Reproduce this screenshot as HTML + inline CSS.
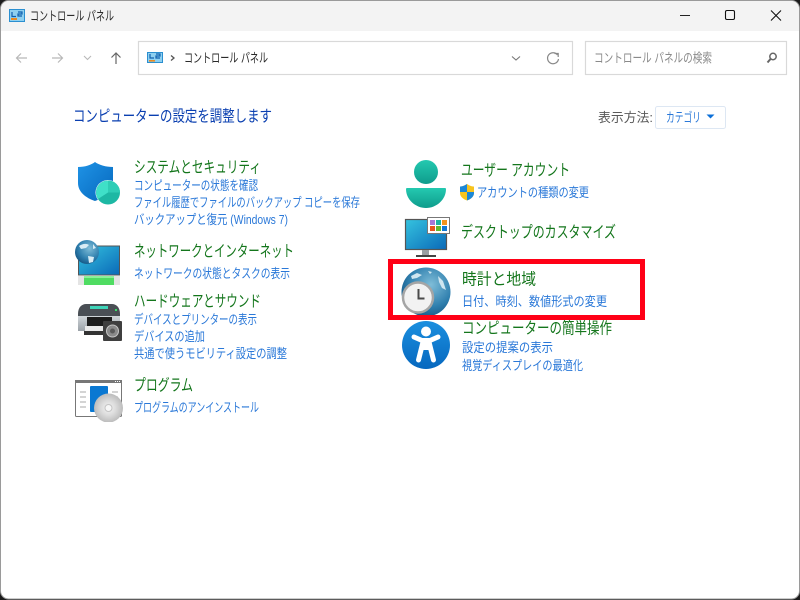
<!DOCTYPE html>
<html lang="ja">
<head>
<meta charset="utf-8">
<title>コントロール パネル</title>
<style>
html,body{margin:0;padding:0;width:800px;height:600px;overflow:hidden;background:#fff}
svg{display:block;position:absolute;left:0;top:0}
text{font-family:"Liberation Sans","Noto Sans CJK JP",sans-serif;white-space:pre}
.t{font-size:16px;fill:#14761c}
.l{font-size:13px;fill:#2a78d8}
.g{font-size:13px;fill:#2a2a2a}
</style>
</head>
<body>
<svg width="800" height="600" viewBox="0 0 800 600" xmlns="http://www.w3.org/2000/svg">
<defs>
<linearGradient id="sh" x1="0" y1="0" x2="1" y2="1"><stop offset="0" stop-color="#1f93e6"/><stop offset="1" stop-color="#0668bd"/></linearGradient>
<linearGradient id="mon" x1="0" y1="0" x2="1" y2="1"><stop offset="0" stop-color="#35c3df"/><stop offset="1" stop-color="#0a69b8"/></linearGradient>
<linearGradient id="usr" x1="0" y1="0" x2="0" y2="1"><stop offset="0" stop-color="#24c9b0"/><stop offset="1" stop-color="#0e9c8c"/></linearGradient>
<radialGradient id="glb" cx=".6" cy=".35" r=".75"><stop offset="0" stop-color="#7fbdd8"/><stop offset=".6" stop-color="#2f7fae"/><stop offset="1" stop-color="#0f4e7c"/></radialGradient>
<radialGradient id="cd" cx=".5" cy=".5" r=".5"><stop offset="0" stop-color="#f4f4f4"/><stop offset=".5" stop-color="#dcdcdc"/><stop offset="1" stop-color="#bcbcbc"/></radialGradient>
<linearGradient id="acc" x1="0" y1="0" x2="0" y2="1"><stop offset="0" stop-color="#1b8fdf"/><stop offset="1" stop-color="#0668bf"/></linearGradient>
<linearGradient id="pr" x1="0" y1="0" x2="0" y2="1"><stop offset="0" stop-color="#d0d5d9"/><stop offset="1" stop-color="#9aa1a7"/></linearGradient>
<clipPath id="redclip"><rect x="393" y="260" width="120" height="55"/></clipPath>
<clipPath id="cdclip"><rect x="70" y="378" width="60" height="44"/></clipPath>
</defs>

<!-- window -->
<rect x="0" y="0" width="800" height="600" fill="#1c1c1c"/>
<rect x="0.5" y="0.5" width="799" height="598.5" rx="8" fill="#fff" stroke="#9a9a9a"/>
<path d="M1 31V9a8 8 0 0 1 8-8H791a8 8 0 0 1 8 8V31Z" fill="#f3f3f3"/>

<!-- titlebar icon -->
<g>
<rect x="9.500" y="9.500" width="15" height="12" fill="#8ed0f0" stroke="#2b8fd0"/>
<path d="M12 12v4.500h4M18 12h4v2h-4v2h4" fill="none" stroke="#0f5fae" stroke-width="1.200"/>
<rect x="11" y="18" width="6" height="2" fill="#e98b22"/>
</g>
<text x="30" y="20.500" class="g" textLength="84" lengthAdjust="spacingAndGlyphs">コントロール パネル</text>

<!-- caption buttons -->
<rect x="680" y="15" width="10" height="1" fill="#222"/>
<rect x="725.500" y="10.500" width="9" height="9" rx="1.500" fill="none" stroke="#111" stroke-width="1.100"/>
<path d="M771 10.500 781 20.500M781 10.500 771 20.500" stroke="#111" stroke-width="1.100" fill="none"/>

<!-- nav -->
<path d="M27 58H16.500M21 53.500 16.500 58 21 62.500" fill="none" stroke="#b8b8b8" stroke-width="1.200"/>
<path d="M52 58H62.500M58 53.500 62.500 58 58 62.500" fill="none" stroke="#b8b8b8" stroke-width="1.200"/>
<path d="M84 56 87.500 59.500 91 56" fill="none" stroke="#b8b8b8" stroke-width="1.100"/>
<path d="M116 64V53M111.500 57.500 116 53 120.500 57.500" fill="none" stroke="#666" stroke-width="1.200"/>

<!-- address box -->
<rect x="138.500" y="41.500" width="434" height="33" fill="#fff" stroke="#d9d9d9" stroke-width="1.200"/>
<g>
<rect x="147.500" y="52.500" width="15" height="10" fill="#8ed0f0" stroke="#2b8fd0"/>
<path d="M150 54v4h4M156 54h4v2h-4v2h4" fill="none" stroke="#0f5fae" stroke-width="1.200"/>
<rect x="149" y="60" width="6" height="1.600" fill="#e98b22"/>
</g>
<path d="M171 55.500 174 58 171 60.500" fill="none" stroke="#555" stroke-width="1.300"/>
<text x="184" y="62.500" class="g" textLength="84" lengthAdjust="spacingAndGlyphs">コントロール パネル</text>
<path d="M512 56.500 516 60 520 56.500" fill="none" stroke="#777" stroke-width="1.100"/>
<path d="M557.500 55A5.500 5.500 0 1 0 558.500 59" fill="none" stroke="#888" stroke-width="1.200"/>
<path d="M554.500 53.500H558.200V57" fill="none" stroke="#888" stroke-width="1.200"/>

<!-- search box -->
<rect x="585.500" y="41.500" width="201" height="33" fill="#fff" stroke="#d9d9d9" stroke-width="1.200"/>
<text x="594" y="62.500" style="font-size:13px;fill:#8a8a8a" textLength="118" lengthAdjust="spacingAndGlyphs">コントロール パネルの検索</text>
<circle cx="773" cy="56.500" r="3.200" fill="none" stroke="#666" stroke-width="1.500"/>
<path d="M770.500 59 767.500 62.500" stroke="#666" stroke-width="2" fill="none"/>

<!-- header -->
<text x="73" y="121.500" style="font-size:16px;fill:#0a3fb0" textLength="199" lengthAdjust="spacingAndGlyphs">コンピューターの設定を調整します</text>
<text x="598" y="122" style="font-size:13px;fill:#5a5a5a" textLength="55" lengthAdjust="spacingAndGlyphs">表示方法:</text>
<rect x="655.500" y="106.500" width="70" height="22" rx="2" fill="#fff" stroke="#dde7f3"/>
<text x="666" y="122" style="font-size:13px;fill:#2a78d8" textLength="35" lengthAdjust="spacingAndGlyphs">カテゴリ</text>
<path d="M706.500 114.500H714.500L710.500 118.500Z" fill="#0b6fd8"/>

<!-- left column text -->
<text x="134" y="172.500" class="t" textLength="127" lengthAdjust="spacingAndGlyphs">システムとセキュリティ</text>
<text x="134" y="190" class="l" textLength="124" lengthAdjust="spacingAndGlyphs">コンピューターの状態を確認</text>
<text x="134" y="207" class="l" textLength="226" lengthAdjust="spacingAndGlyphs">ファイル履歴でファイルのバックアップ コピーを保存</text>
<text x="134" y="224" class="l" textLength="154" lengthAdjust="spacingAndGlyphs">バックアップと復元 (Windows 7)</text>
<text x="134" y="256.500" class="t" textLength="160" lengthAdjust="spacingAndGlyphs">ネットワークとインターネット</text>
<text x="134" y="278" class="l" textLength="156" lengthAdjust="spacingAndGlyphs">ネットワークの状態とタスクの表示</text>
<text x="134" y="306.500" class="t" textLength="127" lengthAdjust="spacingAndGlyphs">ハードウェアとサウンド</text>
<text x="134" y="324" class="l" textLength="123" lengthAdjust="spacingAndGlyphs">デバイスとプリンターの表示</text>
<text x="134" y="341" class="l" textLength="71" lengthAdjust="spacingAndGlyphs">デバイスの追加</text>
<text x="134" y="358" class="l" textLength="153" lengthAdjust="spacingAndGlyphs">共通で使うモビリティ設定の調整</text>
<text x="134" y="390.500" class="t" textLength="59" lengthAdjust="spacingAndGlyphs">プログラム</text>
<text x="134" y="412" class="l" textLength="125" lengthAdjust="spacingAndGlyphs">プログラムのアンインストール</text>

<!-- right column text -->
<text x="461" y="175.500" class="t" textLength="109" lengthAdjust="spacingAndGlyphs">ユーザー アカウント</text>
<text x="477" y="197" class="l" textLength="112" lengthAdjust="spacingAndGlyphs">アカウントの種類の変更</text>
<text x="461" y="237.500" class="t" textLength="155" lengthAdjust="spacingAndGlyphs">デスクトップのカスタマイズ</text>
<text x="462" y="284.500" class="t" textLength="74" lengthAdjust="spacingAndGlyphs">時計と地域</text>
<text x="462" y="306" class="l" textLength="145" lengthAdjust="spacingAndGlyphs">日付、時刻、数値形式の変更</text>
<text x="462" y="333.500" class="t" textLength="150" lengthAdjust="spacingAndGlyphs">コンピューターの簡単操作</text>
<text x="462" y="352" class="l" textLength="91" lengthAdjust="spacingAndGlyphs">設定の提案の表示</text>
<text x="462" y="370" class="l" textLength="121" lengthAdjust="spacingAndGlyphs">視覚ディスプレイの最適化</text>

<!-- shield icon -->
<path d="M78 167C85 167 91 165 95 162C99 165 106 167 113 167V183C113 192 104 198 95 201C86 198 78 192 78 183Z" fill="url(#sh)"/>
<circle cx="108" cy="192.500" r="12.500" fill="#fff"/>
<circle cx="108" cy="192.500" r="12" fill="#1db8a4"/>
<path d="M108 192.500V180.500A12 12 0 0 0 98 199Z" fill="#3fe0c8"/>
<path d="M108 192.500V180.500A12 12 0 0 1 120 192.500Z" fill="#2ecdb6"/>

<!-- network icon -->
<rect x="78.500" y="246" width="41" height="29" fill="url(#mon)" stroke="#555"/>
<rect x="78" y="276" width="42" height="9" fill="#e4e4e4"/>
<rect x="84" y="276" width="30" height="9" fill="#4fdc62"/>
<rect x="84" y="276" width="30" height="2" fill="#8cf09a"/>
<circle cx="87" cy="252" r="12" fill="url(#glb)"/>
<path d="M79 246c3-2 7-3 10-1l-3 3-5 1ZM88 256l6 1-1 5-4 1ZM93 244l3 4-3 1Z" fill="#d8ecf5"/>

<!-- printer icon -->
<path d="M78 314C78 307 82 304 86 304H112C116 304 120 307 120 314V316H78Z" fill="#4a4f55"/>
<rect x="90" y="306" width="18" height="3" fill="#3ed4b8"/>
<rect x="115" y="309" width="2" height="2" fill="#3be06a"/>
<rect x="78" y="316" width="42" height="15" fill="url(#pr)"/>
<rect x="87" y="317" width="25" height="9" fill="#1d1d1d"/>
<rect x="85" y="326" width="29" height="7" fill="#eaeaea"/>
<rect x="84" y="331" width="20" height="4" fill="#333"/>
<rect x="103" y="321" width="19" height="20" rx="1" fill="#3f3f3f"/>
<circle cx="112.500" cy="331" r="6" fill="#8a8a8a" stroke="#c5c5c5"/>
<circle cx="112.500" cy="331" r="2.500" fill="#5a5a5a"/>

<!-- program icon -->
<rect x="75.500" y="380.500" width="46" height="36" rx="1" fill="#fff" stroke="#777"/>
<rect x="75" y="380" width="47" height="3" fill="#777"/>
<path d="M115 381.500h1M117 381.500h1M119 381.500h1" stroke="#fff"/>
<rect x="90" y="386" width="18" height="26" rx="1" fill="#0a78d2"/>
<path d="M80 392h6M80 397h6M80 402h6M80 407h6M112 392h6M112 397h6" stroke="#aaa" stroke-width="1"/>
<g clip-path="url(#cdclip)">
<circle cx="108.500" cy="408" r="14.500" fill="url(#cd)"/>
<circle cx="108.500" cy="408" r="3.500" fill="#f7f7f7" stroke="#c4c4c4"/>
</g>

<!-- user icon -->
<circle cx="426" cy="172" r="12" fill="url(#usr)"/>
<path d="M406 189Q406 188 407 188H445Q446 188 446 189C446 200 436 208 426 208C416 208 406 200 406 189Z" fill="url(#usr)"/>
<path d="M467 184C470 186 472 186.500 474 186.500V193C474 197 470 199.500 467 200.500C464 199.500 460 197 460 193V186.500C462 186.500 464 186 467 184Z" fill="#f7c41f"/>
<path d="M467 184C464 186 462 186.500 460 186.500V192H467ZM467 192H474V193C474 197 470 199.500 467 200.500Z" fill="#1b87d8"/>

<!-- desktop icon -->
<rect x="405.500" y="219.500" width="41" height="30" fill="url(#mon)" stroke="#555" stroke-width="1.200"/>
<rect x="422" y="250" width="7" height="5" fill="#9a9fa3"/>
<rect x="416" y="255" width="20" height="2" fill="#444"/>
<rect x="427.500" y="217.500" width="22" height="16" fill="#fff" stroke="#777"/>
<rect x="430" y="220" width="5" height="5" fill="#a577d6"/>
<rect x="436" y="220" width="5" height="5" fill="#1cb3a4"/>
<rect x="442" y="220" width="5" height="5" fill="#f2931c"/>
<rect x="430" y="226" width="5" height="5" fill="#e8541c"/>
<rect x="436" y="226" width="5" height="5" fill="#64b82a"/>
<rect x="442" y="226" width="5" height="5" fill="#0f78d4"/>

<!-- clock globe icon -->
<g clip-path="url(#redclip)">
<circle cx="426" cy="292" r="24.500" fill="url(#glb)"/>
<path d="M411 276l6-3 5 2-5 3-5 1ZM438 276l5 5 3 9-4-2-3-6ZM428 271l4 1-2 2Z" fill="#cfe6f0"/>
<circle cx="418" cy="297.500" r="15" fill="#f2f2f2" stroke="#a5a5a5" stroke-width="2.500"/>
<path d="M418.500 289V298.500H424.500" fill="none" stroke="#4a4a4a" stroke-width="2"/>
</g>

<!-- red box -->
<rect x="390.500" y="261.500" width="252" height="56" fill="none" stroke="#ff0016" stroke-width="5"/>

<!-- access icon -->
<circle cx="426" cy="345" r="24" fill="url(#acc)"/>
<circle cx="426" cy="331.500" r="5" fill="#fff"/>
<path d="M414 337 422 340.500H430L438 337" fill="none" stroke="#fff" stroke-width="5" stroke-linecap="round" stroke-linejoin="round"/>
<path d="M423 342 418.500 360M429 342 433.500 360" fill="none" stroke="#fff" stroke-width="5" stroke-linecap="round"/>
<rect x="421" y="339" width="10" height="11" fill="#fff"/>
</svg>
</body>
</html>
